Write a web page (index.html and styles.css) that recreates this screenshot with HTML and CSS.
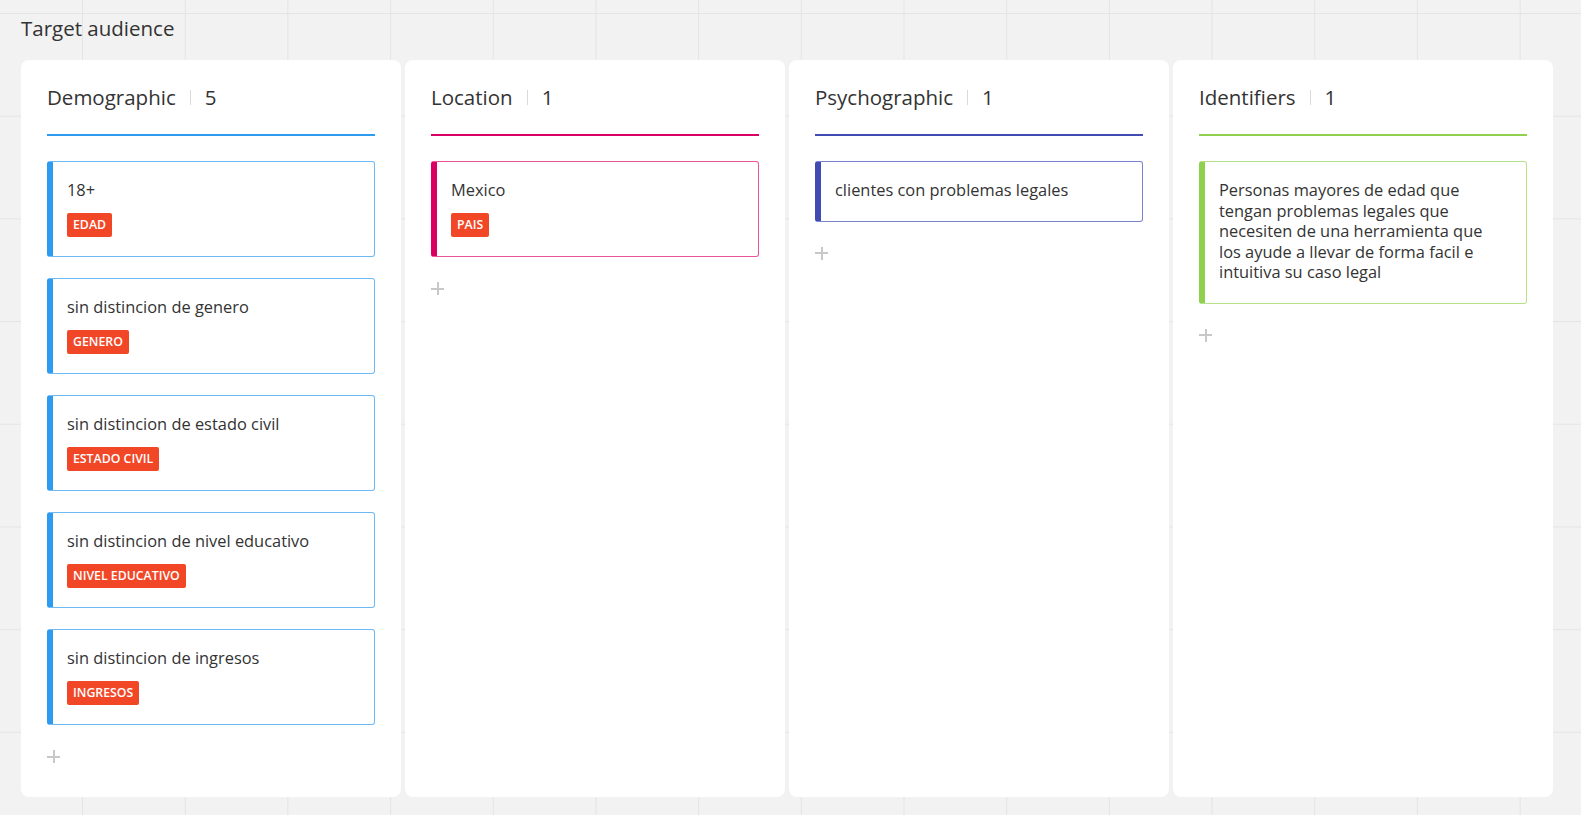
FILE: index.html
```html
<!DOCTYPE html>
<html lang="es">
<head>
<meta charset="utf-8">
<title>Target audience</title>
<link rel="stylesheet" href="styles.css">
</head>
<body>
<div class="canvas">
  <h1 class="frame-title">Target audience</h1>
  <div class="board">
    <section class="column col-blue">
      <header class="col-head"><span class="col-name">Demographic</span><span class="sep"></span><span class="col-count">5</span></header>
      <div class="cards">
        <div class="card"><p class="card-text">18+</p><span class="tag">EDAD</span></div>
        <div class="card"><p class="card-text">sin distincion de genero</p><span class="tag">GENERO</span></div>
        <div class="card"><p class="card-text">sin distincion de estado civil</p><span class="tag">ESTADO CIVIL</span></div>
        <div class="card"><p class="card-text">sin distincion de nivel educativo</p><span class="tag">NIVEL EDUCATIVO</span></div>
        <div class="card"><p class="card-text">sin distincion de ingresos</p><span class="tag">INGRESOS</span></div>
      </div>
      <div class="add"><span class="plus"></span></div>
    </section>
    <section class="column col-pink">
      <header class="col-head"><span class="col-name">Location</span><span class="sep"></span><span class="col-count">1</span></header>
      <div class="cards">
        <div class="card"><p class="card-text">Mexico</p><span class="tag">PAIS</span></div>
      </div>
      <div class="add"><span class="plus"></span></div>
    </section>
    <section class="column col-indigo">
      <header class="col-head"><span class="col-name">Psychographic</span><span class="sep"></span><span class="col-count">1</span></header>
      <div class="cards">
        <div class="card"><p class="card-text">clientes con problemas legales</p></div>
      </div>
      <div class="add"><span class="plus"></span></div>
    </section>
    <section class="column col-green">
      <header class="col-head"><span class="col-name">Identifiers</span><span class="sep"></span><span class="col-count">1</span></header>
      <div class="cards">
        <div class="card"><p class="card-text">Personas mayores de edad que tengan problemas legales que necesiten de una herramienta que los ayude a llevar de forma facil e intuitiva su caso legal</p></div>
      </div>
      <div class="add"><span class="plus"></span></div>
    </section>
  </div>
</div>
</body>
</html>
```

FILE: styles.css
```css
html, body {
  margin: 0;
  padding: 0;
}
body {
  width: 1581px;
  height: 815px;
  overflow: hidden;
  font-family: "Open Sans", "Noto Sans", sans-serif;
  color: #333333;
  background-color: #f2f2f2;
  background-image:
    linear-gradient(to right, #e4e4e4 1px, transparent 1px),
    linear-gradient(to bottom, #e4e4e4 1px, transparent 1px);
  background-size: 102.7px 102.7px;
  background-position: 82px 13px;
}
.canvas {
  padding: 14px 0 0 21px;
}
.frame-title {
  margin: 0;
  font-size: 20.5px;
  font-weight: 400;
  line-height: 28px;
  color: #333333;
}
.board {
  display: flex;
  gap: 4px;
  margin-top: 18px;
}
.column {
  width: 380px;
  height: 737px;
  box-sizing: border-box;
  background: #ffffff;
  border-radius: 8px;
  padding: 0 26px;
}
.col-head {
  display: flex;
  align-items: center;
  height: 76px;
  box-sizing: border-box;
  padding-top: 0;
  border-bottom: 2px solid var(--c);
  font-size: 20.5px;
  color: #333333;
}
.sep {
  width: 1px;
  height: 15px;
  background: #d9d9d9;
  margin: 0 14px 0 14px;
}
.cards {
  display: flex;
  flex-direction: column;
  gap: 21px;
  margin-top: 25px;
}
.card {
  box-sizing: border-box;
  border: 1px solid var(--cl);
  border-left: 6px solid var(--c);
  border-radius: 3px;
  padding: 18px 20px 20px 14px;
}
.card-text {
  margin: 0;
  font-size: 16.4px;
  line-height: 20.5px;
  color: #333333;
}
.tag {
  display: inline-block;
  margin-top: 12.5px;
  margin-bottom: -1px;
  background: #f24726;
  color: #ffffff;
  font-size: 12.3px;
  font-weight: 600;
  line-height: 24px;
  height: 24px;
  padding: 0 6px;
  border-radius: 2px;
  vertical-align: top;
}
.add {
  height: 13px;
  margin-top: 25px;
  display: flex;
  align-items: center;
}
.plus {
  position: relative;
  width: 13px;
  height: 13px;
}
.plus::before, .plus::after {
  content: "";
  position: absolute;
  background: #c8c8c8;
}
.plus::before {
  left: 0;
  right: 0;
  top: 5.5px;
  height: 2px;
}
.plus::after {
  top: 0;
  bottom: 0;
  left: 5.5px;
  width: 2px;
}
.col-blue { --c: #2d9bf0; --cl: #6cb9f4; }
.col-pink { --c: #da0063; --cl: #e8559a; }
.col-indigo { --c: #414bb2; --cl: #7a81cc; }
.col-green { --c: #8fd14f; --cl: #b5e188; }
```
